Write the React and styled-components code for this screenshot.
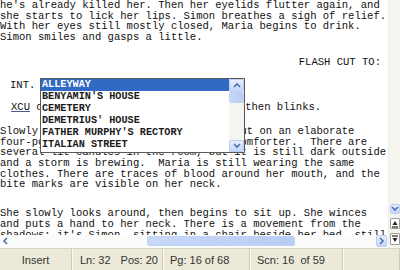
import React from 'react';
import styled, { createGlobalStyle } from 'styled-components';

const INK = '#111';
const BEIGE = '#ece9d8';
const SELECT = '#316ac5';
const ARROW = '#4d6fb0';

const Global = createGlobalStyle`
	html, body { margin: 0; padding: 0; }
	body { width: 400px; height: 270px; overflow: hidden; background: #fff; }
`;

const Window = styled.div`
	display: grid;
	grid-template-rows: 248px 22px;
	width: 400px;
	height: 270px;
`;

const Main = styled.div`
	display: flex;
	min-height: 0;
`;

const Editor = styled.div`
	flex: 1;
	display: flex;
	flex-direction: column;
	min-width: 0;
	background: #fff;
`;

const Page = styled.div`
	position: relative;
	flex: 1;
	overflow: hidden;
	font-family: "Liberation Mono", "Courier New", monospace;
	font-size: 10.55px;
	line-height: 10.7px;
	color: ${INK};
`;

const Action = styled.p`
	margin: ${p => p.$gap || 0}px 0 0 ${p => p.$indent || 0}px;
	white-space: pre;
`;

const Transition = styled.p`
	margin: 14px 7px 0 0;
	text-align: right;
	white-space: pre;
`;

const Flag = styled.span`
	text-decoration: underline;
	text-decoration-color: #4a5a8a;
	text-underline-offset: 1px;
`;

const Popup = styled.div`
	position: absolute;
	left: 40px;
	top: 78px;
	width: 205px;
	height: 75px;
	box-sizing: border-box;
	border: 1px solid #5a5a5a;
	background: #fff;
	display: flex;
`;

const List = styled.ul`
	list-style: none;
	margin: 0;
	padding: 0;
	flex: 1;
`;

const Item = styled.li`
	height: 12px;
	line-height: 12px;
	padding-left: 1px;
	font-family: "Liberation Mono", "Courier New", monospace;
	font-weight: bold;
	font-size: 10.2px;
	white-space: pre;
	background: ${p => (p.$active ? SELECT : 'transparent')};
	color: ${p => (p.$active ? '#fff' : '#1a1a1a')};
`;

const ListBar = styled.div`
	width: 15px;
	display: flex;
	flex-direction: column;
	background: #f5f4ef;
`;

const Button = styled.div`
	flex: none;
	height: ${p => p.$h || 12}px;
	width: ${p => p.$w || 'auto'};
	box-sizing: border-box;
	display: flex;
	align-items: center;
	justify-content: center;
	border-radius: 2px;
	border: 1px solid ${p => (p.$plain ? 'transparent' : '#bccdf3')};
	background: ${p => (p.$plain ? 'transparent' : 'linear-gradient(#e6eefd, #c5d6fb)')};
`;

const Thumb = styled.div`
	flex: none;
	height: ${p => p.$h || 'auto'};
	width: ${p => p.$w || 'auto'};
	margin-left: ${p => p.$x || 0}px;
	box-sizing: border-box;
	border-radius: 2px;
	border: 1px solid #c2d2f4;
	background: linear-gradient(90deg, #c9d8f8, #b8ccf4);
`;

const Spacer = styled.div`
	flex: 1;
`;

const HScroll = styled.div`
	height: 13px;
	display: flex;
	align-items: stretch;
	background: #fbfbf9;
	padding: 0 1px 1px 0;
	box-sizing: border-box;
`;

const HTrack = styled.div`
	flex: 1;
	display: flex;
	align-items: stretch;
	padding: 1px 0;
`;

const VScroll = styled.div`
	width: 12px;
	display: flex;
	flex-direction: column;
	align-items: center;
	gap: 4px;
	padding-bottom: 3px;
	box-sizing: border-box;
	background: #f5f4ef;
	border-left: 1px solid #eeede6;
`;

const NavButton = styled.div`
	width: 10px;
	height: ${p => p.$h}px;
	box-sizing: border-box;
	border: 1px solid #9a9a9a;
	border-radius: 1px;
	background: #fff;
	display: flex;
	align-items: center;
	justify-content: center;
`;

const Status = styled.div`
	display: flex;
	background: ${BEIGE};
	border-top: 1px solid #d8d4c2;
	font-family: "Liberation Sans", Arial, sans-serif;
	font-size: 11px;
	color: #333;
`;

const Panel = styled.div`
	width: ${p => (p.$w ? `${p.$w}px` : 'auto')};
	flex: ${p => (p.$w ? 'none' : 1)};
	display: flex;
	align-items: center;
	justify-content: ${p => (p.$center ? 'center' : 'flex-start')};
	gap: 10px;
	padding-left: ${p => p.$pad || 0}px;
	box-sizing: border-box;
	border-right: 1px solid #d0ccb8;
	box-shadow: 1px 0 0 #fbfaf4;
	white-space: pre;
`;

const Chevron = ({ dir }) => {
	const pts = {
		up: '1,5 4,2 7,5',
		down: '1,2 4,5 7,2',
		left: '5,1 2,4 5,7',
		right: '2,1 5,4 2,7',
	}[dir];
	return (
		<svg width="8" height="8" viewBox="0 0 8 8">
			<polyline points={pts} fill="none" stroke={ARROW} strokeWidth="1.6" />
		</svg>
	);
};

const PageIcon = ({ down }) => (
	<svg width="6" height="8" viewBox="0 0 6 8">
		{down ? (
			<>
				<line x1="0" y1="1" x2="6" y2="1" stroke="#222" strokeWidth="1.2" />
				<polygon points="0.5,3 5.5,3 3,7" fill="#222" />
			</>
		) : (
			<>
				<polygon points="0.5,5 5.5,5 3,1" fill="#222" />
				<line x1="0" y1="7" x2="6" y2="7" stroke="#222" strokeWidth="1.2" />
			</>
		)}
	</svg>
);

const locations = [
	'ALLEYWAY',
	"BENYAMIN'S HOUSE",
	'CEMETERY',
	"DEMETRIUS' HOUSE",
	"FATHER MURPHY'S RECTORY",
	'ITALIAN STREET',
];

export default function App() {
	return (
		<>
			<Global />
			<Window>
				<Main>
					<Editor>
						<Page>
							<Action>{`he's already killed her. Then her eyelids flutter again, and
she starts to lick her lips. Simon breathes a sigh of relief.
With her eyes still mostly closed, Maria begins to drink.
Simon smiles and gasps a little.`}</Action>
							<Transition>FLASH CUT TO:</Transition>
							<Action $gap={12} $indent={10}>INT. </Action>
							<Action $gap={12} $indent={11}>
								<Flag>XCU</Flag>{` of Maria's face. She smiles, and then blinks.`}
							</Action>
							<Action $gap={13}>{`Slowly we now see that Maria is laid out on an elaborate
four-poster bed, under a heavy satin comforter.  There are
several lit candles in the room, but it is still dark outside
and a storm is brewing.  Maria is still wearing the same
clothes. There are traces of blood around her mouth, and the
bite marks are visible on her neck.`}</Action>
							<Action $gap={18}>{`She slowly looks around, then begins to sit up. She winces
and puts a hand to her neck. There is a movement from the
shadows; it's Simon, sitting in a chair beside her bed, still`}</Action>

							<Popup>
								<List>
									{locations.map((loc, i) => (
										<Item key={loc} $active={i === 0}>{loc}</Item>
									))}
								</List>
								<ListBar>
									<Button $h={13}><Chevron dir="up" /></Button>
									<Thumb $h="11px" />
									<Spacer />
									<Button $h={12}><Chevron dir="down" /></Button>
								</ListBar>
							</Popup>
						</Page>
						<HScroll>
							<Button $plain $w="11px"><Chevron dir="left" /></Button>
							<HTrack>
								<Thumb $x={136} $w="148px" />
							</HTrack>
							<Button $w="11px"><Chevron dir="right" /></Button>
						</HScroll>
					</Editor>
					<VScroll>
						<Spacer />
						<Button $h={10} $w="10px"><Chevron dir="down" /></Button>
						<NavButton $h={11}><PageIcon /></NavButton>
						<NavButton $h={12}><PageIcon down /></NavButton>
					</VScroll>
				</Main>
				<Status>
					<Panel $w={72} $center>Insert</Panel>
					<Panel $w={91} $pad={8}>
						<span>Ln: 32</span>
						<span>Pos: 20</span>
					</Panel>
					<Panel $w={87} $pad={7}>Pg: 16 of 68</Panel>
					<Panel $w={93} $pad={7}>Scn: 16  of 59</Panel>
					<Panel />
				</Status>
			</Window>
		</>
	);
}
